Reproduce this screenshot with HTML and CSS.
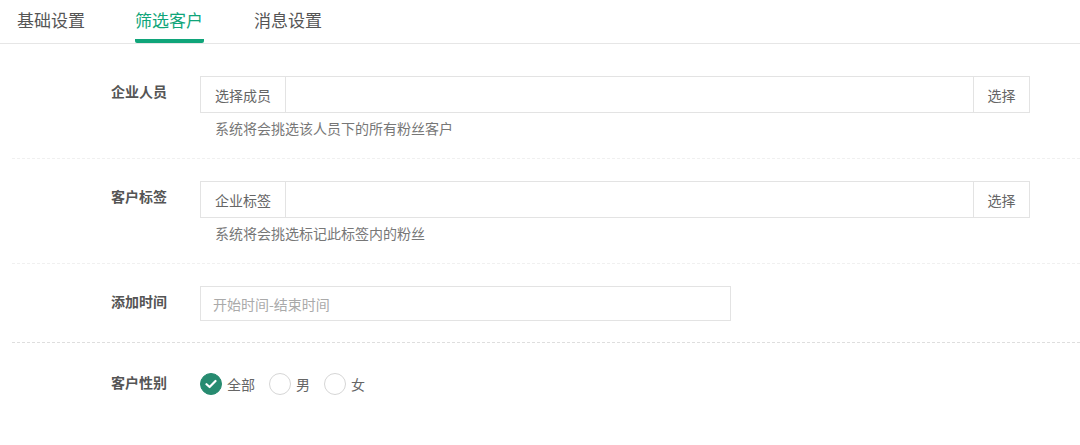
FILE: index.html
```html
<!DOCTYPE html>
<html lang="zh-CN">
<head>
    <meta charset="UTF-8">
    <meta name="viewport" content="width=device-width, initial-scale=1.0">
    <title>筛选客户</title>
    <link rel="stylesheet" href="styles.css">
</head>
<body>
    <!-- 顶部选项卡 -->
    <nav class="tabs">
        <a class="tab">基础设置</a>
        <a class="tab active">筛选客户</a>
        <a class="tab">消息设置</a>
    </nav>

    <!-- 筛选表单 -->
    <form class="filter-form">
        <div class="form-row">
            <label class="row-label">企业人员</label>
            <div class="row-body">
                <div class="input-group">
                    <span class="addon">选择成员</span>
                    <input type="text" class="group-input">
                    <button type="button" class="addon addon-btn">选择</button>
                </div>
                <p class="help">系统将会挑选该人员下的所有粉丝客户</p>
            </div>
        </div>

        <div class="form-row">
            <label class="row-label">客户标签</label>
            <div class="row-body">
                <div class="input-group">
                    <span class="addon">企业标签</span>
                    <input type="text" class="group-input">
                    <button type="button" class="addon addon-btn">选择</button>
                </div>
                <p class="help">系统将会挑选标记此标签内的粉丝</p>
            </div>
        </div>

        <div class="form-row dashed">
            <label class="row-label">添加时间</label>
            <div class="row-body">
                <input type="text" class="date-input" placeholder="开始时间-结束时间">
            </div>
        </div>

        <div class="form-row last">
            <label class="row-label">客户性别</label>
            <div class="row-body radios">
                <label class="radio checked"><span class="dot">
                    <svg width="12" height="10" viewBox="0 0 12 10"><path d="M1.5 5.2 L4.6 8 L10.5 2" fill="none" stroke="#fff" stroke-width="2.2" stroke-linecap="round" stroke-linejoin="round"/></svg>
                </span>全部</label>
                <label class="radio"><span class="dot"></span>男</label>
                <label class="radio"><span class="dot"></span>女</label>
            </div>
        </div>
    </form>
</body>
</html>
```

FILE: styles.css
```css
* {
  margin: 0;
  padding: 0;
  box-sizing: border-box;
}

body {
  font-family: "Noto Sans CJK SC", "Noto Sans", sans-serif;
  background-color: #fff;
  color: #555;
  width: 1080px;
  height: 445px;
  overflow: hidden;
}

.tabs {
  display: flex;
  padding-left: 17px;
  border-bottom: 1px solid #e6e6e6;
  height: 44px;
}

.tab {
  font-size: 17px;
  line-height: 24px;
  padding-top: 8px;
  margin-right: 50px;
  color: #555;
  height: 43px;
  border-bottom: 4px solid transparent;
  cursor: pointer;
}

.tab.active {
  color: #10a57a;
  border-bottom-color: #10a57a;
  border-radius: 0 0 2px 2px;
  padding-right: 1px;
}

.filter-form {
  margin-left: 12px;
  padding-top: 10px;
}

.form-row {
  display: flex;
  padding: 22px 0 20px;
  border-bottom: 1px dashed #f0f0f0;
}

.form-row.dashed {
  border-bottom-color: #dedede;
  padding-bottom: 21px;
}

.form-row.last {
  border-bottom: none;
  padding-top: 24px;
}

.row-label {
  width: 155px;
  text-align: right;
  font-size: 14px;
  font-weight: bold;
  color: #555;
  line-height: 30px;
  flex-shrink: 0;
}

.row-body {
  margin-left: 33px;
}

.input-group {
  display: flex;
  width: 830px;
  height: 37px;
  border: 1px solid #e3e3e3;
}

.addon {
  font-family: inherit;
  font-size: 14px;
  color: #666;
  background: #fff;
  border: none;
  display: flex;
  align-items: center;
  justify-content: center;
  width: 85px;
  border-right: 1px solid #e3e3e3;
  flex-shrink: 0;
}

.addon-btn {
  width: 56px;
  border-right: none;
  border-left: 1px solid #e3e3e3;
  cursor: pointer;
}

.group-input {
  flex: 1;
  border: none;
  outline: none;
}

.help {
  font-size: 14px;
  color: #777;
  line-height: 20px;
  margin-top: 5px;
  padding-left: 15px;
}

.date-input {
  width: 531px;
  height: 35px;
  border: 1px solid #e3e3e3;
  padding-left: 12px;
  font-family: inherit;
  font-size: 14px;
  color: #555;
  outline: none;
}

.date-input::placeholder {
  color: #aaa;
}

.radios {
  display: flex;
  align-items: center;
  height: 34px;
}

.radio {
  display: flex;
  align-items: center;
  font-size: 14px;
  color: #666;
  margin-right: 14px;
  cursor: pointer;
}

.dot {
  width: 22px;
  height: 22px;
  border-radius: 50%;
  border: 1px solid #d6d6d6;
  margin-right: 5px;
  display: flex;
  align-items: center;
  justify-content: center;
}

.radio.checked .dot {
  background-color: #278b70;
  border-color: #278b70;
}
```
